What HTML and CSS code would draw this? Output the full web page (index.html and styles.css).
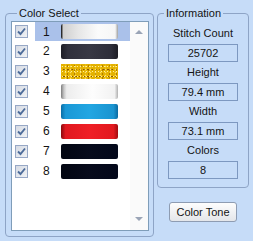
FILE: index.html
```html
<!DOCTYPE html>
<html lang="en">
<head>
    <meta charset="UTF-8">
    <title>Color Select</title>
    <link rel="stylesheet" href="styles.css">
</head>
<body>
    <div class="window">
        <!-- Lista de colores -->
        <fieldset class="group color-select">
            <legend>Color Select</legend>
            <div class="listbox">
                <ul class="color-list">
                    <li class="row selected">
                        <span class="check"><svg viewBox="0 0 11 11" width="11" height="11"><path d="M2 5.5 L4.5 8 L9 2.5"/></svg></span>
                        <span class="item"><span class="num">1</span><span class="swatch swatch-1"></span></span>
                    </li>
                    <li class="row">
                        <span class="check"><svg viewBox="0 0 11 11" width="11" height="11"><path d="M2 5.5 L4.5 8 L9 2.5"/></svg></span>
                        <span class="item"><span class="num">2</span><span class="swatch swatch-2"></span></span>
                    </li>
                    <li class="row">
                        <span class="check"><svg viewBox="0 0 11 11" width="11" height="11"><path d="M2 5.5 L4.5 8 L9 2.5"/></svg></span>
                        <span class="item"><span class="num">3</span><span class="swatch swatch-3"></span></span>
                    </li>
                    <li class="row">
                        <span class="check"><svg viewBox="0 0 11 11" width="11" height="11"><path d="M2 5.5 L4.5 8 L9 2.5"/></svg></span>
                        <span class="item"><span class="num">4</span><span class="swatch swatch-4"></span></span>
                    </li>
                    <li class="row">
                        <span class="check"><svg viewBox="0 0 11 11" width="11" height="11"><path d="M2 5.5 L4.5 8 L9 2.5"/></svg></span>
                        <span class="item"><span class="num">5</span><span class="swatch swatch-5"></span></span>
                    </li>
                    <li class="row">
                        <span class="check"><svg viewBox="0 0 11 11" width="11" height="11"><path d="M2 5.5 L4.5 8 L9 2.5"/></svg></span>
                        <span class="item"><span class="num">6</span><span class="swatch swatch-6"></span></span>
                    </li>
                    <li class="row">
                        <span class="check"><svg viewBox="0 0 11 11" width="11" height="11"><path d="M2 5.5 L4.5 8 L9 2.5"/></svg></span>
                        <span class="item"><span class="num">7</span><span class="swatch swatch-7"></span></span>
                    </li>
                    <li class="row">
                        <span class="check"><svg viewBox="0 0 11 11" width="11" height="11"><path d="M2 5.5 L4.5 8 L9 2.5"/></svg></span>
                        <span class="item"><span class="num">8</span><span class="swatch swatch-8"></span></span>
                    </li>
                </ul>
                <div class="scrollbar">
                    <span class="arrow arrow-up"></span>
                    <span class="arrow arrow-down"></span>
                </div>
            </div>
        </fieldset>

        <!-- Información -->
        <div class="side">
            <fieldset class="group info">
                <legend>Information</legend>
                <div class="field">
                    <div class="label">Stitch Count</div>
                    <div class="value">25702</div>
                </div>
                <div class="field">
                    <div class="label">Height</div>
                    <div class="value">79.4 mm</div>
                </div>
                <div class="field">
                    <div class="label">Width</div>
                    <div class="value">73.1 mm</div>
                </div>
                <div class="field">
                    <div class="label">Colors</div>
                    <div class="value">8</div>
                </div>
            </fieldset>
            <button class="btn-tone">Color Tone</button>
        </div>
    </div>
</body>
</html>
```

FILE: styles.css
```css
* {
    margin: 0;
    padding: 0;
    box-sizing: border-box;
}

body {
    font-family: "Liberation Sans", Arial, sans-serif;
    font-size: 11px;
    color: #141414;
    background: #c6dcf8;
    width: 253px;
    height: 241px;
    overflow: hidden;
}

.window {
    display: flex;
    align-items: flex-start;
    gap: 3px;
    padding: 6px 0 0 5px;
}

.group {
    border: 1px solid #8ea4c6;
    border-radius: 4px;
}

.group legend {
    margin-left: 6px;
    padding: 0 2px;
    line-height: 14px;
}

/* Lista */
.color-select {
    width: 149px;
    padding: 1px 4px 5px 5px;
}

.listbox {
    display: flex;
    width: 138px;
    height: 210px;
    border: 1px solid #7f9db9;
    background: #fff;
}

.color-list {
    list-style: none;
    width: 118px;
}

.row {
    display: flex;
    align-items: center;
    height: 20px;
}

.row:first-child {
    height: 19px;
}

.check {
    display: flex;
    align-items: center;
    justify-content: center;
    width: 13px;
    height: 13px;
    margin: 0 7px 0 3px;
    border: 1px solid #97a8c6;
    background: linear-gradient(135deg, #d6dbe4 0%, #f0f2f5 100%);
}

.check path {
    fill: none;
    stroke: #4d6c9a;
    stroke-width: 1.9;
}

.item {
    display: flex;
    align-items: center;
    width: 96px;
    height: 100%;
}

.row.selected .item {
    background: #aac1ea;
}

.num {
    width: 26px;
    padding-left: 8px;
    font-size: 12px;
}

.swatch {
    width: 57px;
    height: 15px;
    border-radius: 2px;
}

.swatch-1 {
    background: linear-gradient(90deg, #1c1c1c 0, #3a3a3a 1px, #cfcfcf 2px, #e6e6e6 30%, #fbfbfb 65%, #f6f6f6 95%, #a0a0a0 100%);
}

.swatch-2 {
    background: linear-gradient(90deg, #1d1d26 0%, #30303c 12%, #383844 50%, #2e2e3a 88%, #1d1d25 100%);
}

.swatch-3 {
    border-radius: 0;
    background:
        radial-gradient(circle, #fff1a0 0.6px, transparent 1px) 0 0 / 3px 5px,
        radial-gradient(circle, #ffe066 0.7px, transparent 1.1px) 2px 1px / 5px 3px,
        radial-gradient(circle, #8a5a00 0.6px, transparent 1px) 1px 2px / 4px 7px,
        radial-gradient(circle, #b07c00 0.7px, transparent 1.1px) 3px 0 / 7px 4px,
        #e4b200;
}

.swatch-4 {
    background: linear-gradient(90deg, #7d7d7d 0, #c8c8c8 3px, #ededed 10%, #fdfdfd 55%, #f2f2f2 94%, #b0b0b0 100%);
}

.swatch-5 {
    background: linear-gradient(90deg, #0a6ea6 0%, #1a98d6 8%, #22a6e2 50%, #1a94d0 92%, #0b6aa0 100%);
}

.swatch-6 {
    background: linear-gradient(90deg, #8a0a0e 0%, #e0181f 8%, #ef1f26 50%, #e2191f 92%, #a00c10 100%);
}

.swatch-7,
.swatch-8 {
    background: linear-gradient(90deg, #020612 0%, #070b1c 50%, #03071a 100%);
}

.scrollbar {
    display: flex;
    flex-direction: column;
    justify-content: space-between;
    align-items: center;
    width: 18px;
    padding: 8px 0 9px;
    background: #fafafa;
}

.arrow {
    width: 0;
    height: 0;
    border-left: 4px solid transparent;
    border-right: 4px solid transparent;
}

.arrow-up {
    border-bottom: 4px solid #9aa4b6;
}

.arrow-down {
    border-top: 4px solid #9aa4b6;
}

/* Información */
.side {
    display: flex;
    flex-direction: column;
    align-items: center;
    width: 92px;
}

.info {
    width: 92px;
    padding: 3px 0 8px;
}

.label {
    text-align: center;
    line-height: 21px;
}

.value {
    width: 70px;
    height: 18px;
    margin: 0 auto;
    border: 1px solid #7d98c0;
    text-align: center;
    line-height: 16px;
}

.btn-tone {
    margin-top: 14px;
    width: 68px;
    height: 20px;
    font-family: inherit;
    font-size: 11px;
    color: #141414;
    background: linear-gradient(#fdfdfd, #e4e6ea);
    border: 1px solid #8e9cb2;
    border-radius: 3px;
}
```
